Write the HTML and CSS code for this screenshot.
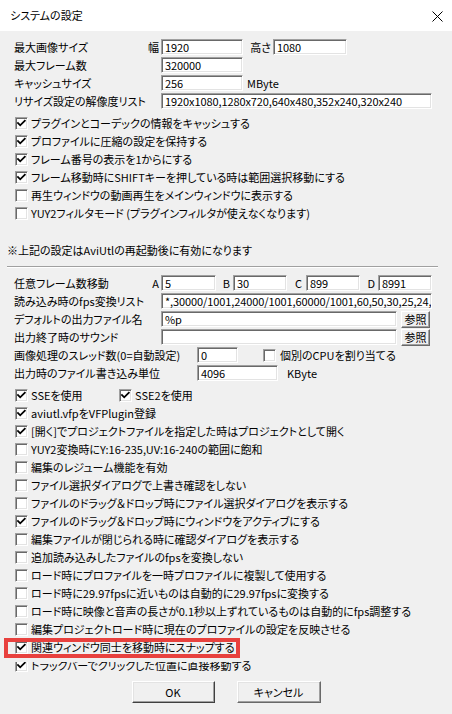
FILE: index.html
```html
<!DOCTYPE html>
<html lang="ja">
<head>
<meta charset="utf-8">
<title>システムの設定</title>
<link rel="stylesheet" href="styles.css">
</head>
<body>
<div class="window">
  <header class="titlebar">
    <span class="title">システムの設定</span>
    <svg class="close" width="11" height="11" viewBox="0 0 11 11"><path d="M0.5 0.5 L10.5 10.5 M10.5 0.5 L0.5 10.5" stroke="#000" stroke-width="1" fill="none"/></svg>
  </header>
  <main class="content">
    <section class="group g-top">
      <div class="row"><span class="lbl w147">最大画像サイズ</span><span class="axis a14">幅</span><span class="field w82">1920</span><span class="axis a30">高さ</span><span class="field w74">1080</span></div>
      <div class="row"><span class="lbl w161">最大フレーム数</span><span class="field w82">320000</span></div>
      <div class="row"><span class="lbl w161">キャッシュサイズ</span><span class="field w82">256</span><span class="unit">MByte</span></div>
      <div class="row"><span class="lbl w161">リサイズ設定の解像度リスト</span><span class="field w271">1920x1080,1280x720,640x480,352x240,320x240</span></div>
    </section>

    <section class="checks c-top">
      <div class="chk"><span class="cb on"><svg viewBox="0 0 11 11"><path d="M2 5 L4.2 7.3 L8.8 2.7" /></svg></span><span>プラグインとコーデックの情報をキャッシュする</span></div>
      <div class="chk"><span class="cb on"><svg viewBox="0 0 11 11"><path d="M2 5 L4.2 7.3 L8.8 2.7" /></svg></span><span>プロファイルに圧縮の設定を保持する</span></div>
      <div class="chk"><span class="cb on"><svg viewBox="0 0 11 11"><path d="M2 5 L4.2 7.3 L8.8 2.7" /></svg></span><span>フレーム番号の表示を1からにする</span></div>
      <div class="chk"><span class="cb on"><svg viewBox="0 0 11 11"><path d="M2 5 L4.2 7.3 L8.8 2.7" /></svg></span><span>フレーム移動時にSHIFTキーを押している時は範囲選択移動にする</span></div>
      <div class="chk"><span class="cb"></span><span>再生ウィンドウの動画再生をメインウィンドウに表示する</span></div>
      <div class="chk"><span class="cb"></span><span>YUY2フィルタモード (プラグインフィルタが使えなくなります)</span></div>
    </section>

    <p class="note">※上記の設定はAviUtlの再起動後に有効になります</p>
    <div class="sep"></div>

    <section class="group g-mid">
      <div class="row"><span class="lbl w147">任意フレーム数移動</span><span class="axis a14">A</span><span class="field w55">5</span><span class="axis a17">B</span><span class="field w54">30</span><span class="axis a19">C</span><span class="field w54">899</span><span class="axis a18">D</span><span class="field w54">8991</span></div>
      <div class="row"><span class="lbl w161">読み込み時のfps変換リスト</span><span class="field w271">*,30000/1001,24000/1001,60000/1001,60,50,30,25,24,20,15,12,10,5,1</span></div>
      <div class="row"><span class="lbl w161">デフォルトの出力ファイル名</span><span class="field w236">%p</span><span class="btn-small">参照</span></div>
      <div class="row"><span class="lbl w161">出力終了時のサウンド</span><span class="field w236"></span><span class="btn-small">参照</span></div>
      <div class="row"><span class="lbl w197">画像処理のスレッド数(0=自動設定)</span><span class="field w41">0</span><span class="cb cpu"></span><span class="cpu-text">個別のCPUを割り当てる</span></div>
      <div class="row"><span class="lbl w197">出力時のファイル書き込み単位</span><span class="field w81">4096</span><span class="unit u9">KByte</span></div>
    </section>

    <section class="checks c-bottom">
      <div class="chk"><span class="chk-item"><span class="cb on"><svg viewBox="0 0 11 11"><path d="M2 5 L4.2 7.3 L8.8 2.7" /></svg></span><span>SSEを使用</span></span><span class="chk-item"><span class="cb on"><svg viewBox="0 0 11 11"><path d="M2 5 L4.2 7.3 L8.8 2.7" /></svg></span><span>SSE2を使用</span></span></div>
      <div class="chk"><span class="cb on"><svg viewBox="0 0 11 11"><path d="M2 5 L4.2 7.3 L8.8 2.7" /></svg></span><span>aviutl.vfpをVFPlugin登録</span></div>
      <div class="chk"><span class="cb on"><svg viewBox="0 0 11 11"><path d="M2 5 L4.2 7.3 L8.8 2.7" /></svg></span><span>[開く]でプロジェクトファイルを指定した時はプロジェクトとして開く</span></div>
      <div class="chk"><span class="cb"></span><span>YUY2変換時にY:16-235,UV:16-240の範囲に飽和</span></div>
      <div class="chk"><span class="cb"></span><span>編集のレジューム機能を有効</span></div>
      <div class="chk"><span class="cb"></span><span>ファイル選択ダイアログで上書き確認をしない</span></div>
      <div class="chk"><span class="cb"></span><span>ファイルのドラッグ＆ドロップ時にファイル選択ダイアログを表示する</span></div>
      <div class="chk"><span class="cb on"><svg viewBox="0 0 11 11"><path d="M2 5 L4.2 7.3 L8.8 2.7" /></svg></span><span>ファイルのドラッグ＆ドロップ時にウィンドウをアクティブにする</span></div>
      <div class="chk"><span class="cb"></span><span>編集ファイルが閉じられる時に確認ダイアログを表示する</span></div>
      <div class="chk"><span class="cb"></span><span>追加読み込みしたファイルのfpsを変換しない</span></div>
      <div class="chk"><span class="cb"></span><span>ロード時にプロファイルを一時プロファイルに複製して使用する</span></div>
      <div class="chk"><span class="cb"></span><span>ロード時に29.97fpsに近いものは自動的に29.97fpsに変換する</span></div>
      <div class="chk"><span class="cb"></span><span>ロード時に映像と音声の長さが0.1秒以上ずれているものは自動的にfps調整する</span></div>
      <div class="chk"><span class="cb"></span><span>編集プロジェクトロード時に現在のプロファイルの設定を反映させる</span></div>
      <div class="chk snap"><span class="cb on"><svg viewBox="0 0 11 11"><path d="M2 5 L4.2 7.3 L8.8 2.7" /></svg></span><span>関連ウィンドウ同士を移動時にスナップする</span></div>
      <div class="chk"><span class="cb on"><svg viewBox="0 0 11 11"><path d="M2 5 L4.2 7.3 L8.8 2.7" /></svg></span><span>トラックバーでクリックした位置に直接移動する</span></div>
    </section>

    <div class="buttons">
      <span class="btn default">OK</span>
      <span class="btn">キャンセル</span>
    </div>
  </main>
</div>
</body>
</html>
```

FILE: styles.css
```css
html, body {
  margin: 0;
  padding: 0;
}
body {
  width: 452px;
  height: 714px;
  overflow: hidden;
  background: #f0f0f0;
  font-family: "Noto Sans CJK JP", "Noto Sans", sans-serif;
  font-size: 11px;
  font-feature-settings: "palt";
  color: #000;
}
.window {
  width: 452px;
  height: 714px;
  display: flex;
  flex-direction: column;
}
.titlebar {
  height: 31px;
  background: #fff;
  display: flex;
  align-items: center;
  justify-content: space-between;
  padding: 0 9px 0 10px;
  box-sizing: border-box;
}
.title {
  font-size: 11px;
  line-height: 31px;
}
.close {
  display: block;
  margin-top: 1px;
}
.content {
  padding: 7px 7px 0 7px;
  display: flex;
  flex-direction: column;
}
.group {
  display: flex;
  flex-direction: column;
}
.row {
  height: 18px;
  display: flex;
  align-items: center;
  padding-left: 7px;
  white-space: nowrap;
}
.lbl {
  flex: none;
  line-height: 18px;
}
.w147 { width: 133px; }
.w161 { width: 147px; }
.w197 { width: 183px; }
.axis {
  flex: none;
  text-align: right;
  padding-right: 2px;
  box-sizing: border-box;
  line-height: 18px;
}
.a14 { width: 14px; }
.a17 { width: 17px; padding-right: 3px; }
.a18 { width: 18px; padding-right: 3px; }
.a19 { width: 19px; padding-right: 4px; }
.a30 { width: 30px; }
.field {
  flex: none;
  height: 16px;
  box-sizing: border-box;
  background: #fff;
  border: 1px solid;
  border-color: #a0a0a0 #fff #fff #a0a0a0;
  box-shadow: inset 1px 1px 0 #696969, inset -1px -1px 0 #e3e3e3;
  padding: 0 2px 0 3px;
  line-height: 14px;
  overflow: hidden;
  white-space: nowrap;
  letter-spacing: -0.1px;
}
.w82 { width: 82px; }
.w74 { width: 74px; }
.w271 { width: 271px; }
.w55 { width: 55px; }
.w54 { width: 54px; }
.w236 { width: 236px; }
.w41 { width: 41px; }
.w81 { width: 81px; }
.unit {
  margin-left: 4px;
  line-height: 18px;
}
.u9 { margin-left: 9px; }
.btn-small {
  flex: none;
  width: 29px;
  height: 17px;
  margin-left: 4px;
  box-sizing: border-box;
  border: 1px solid;
  border-color: #fff #696969 #696969 #fff;
  box-shadow: inset -1px -1px 0 #a0a0a0;
  display: flex;
  align-items: center;
  justify-content: center;
  line-height: 14px;
}
.checks {
  display: flex;
  flex-direction: column;
}
.c-top { margin-top: 4px; }
.c-bottom { margin-top: 4px; }
.chk {
  height: 18px;
  display: flex;
  align-items: center;
  padding-left: 8px;
  white-space: nowrap;
  line-height: 18px;
}
.chk-item {
  display: flex;
  align-items: center;
  width: 104px;
  flex: none;
}
.cb {
  flex: none;
  width: 13px;
  height: 13px;
  box-sizing: border-box;
  background: #fff;
  border: 1px solid;
  border-color: #a0a0a0 #fff #fff #a0a0a0;
  box-shadow: inset 1px 1px 0 #696969, inset -1px -1px 0 #e3e3e3;
  margin-right: 3px;
  position: relative;
}
.cb svg {
  position: absolute;
  left: 0;
  top: 0;
  width: 11px;
  height: 11px;
}
.cb svg path {
  fill: none;
  stroke: #000;
  stroke-width: 1.8;
  stroke-linecap: square;
}
.cb.cpu {
  margin-left: 25px;
  margin-right: 4px;
}
.note {
  margin: 19px 0 0 0;
  height: 18px;
  line-height: 18px;
  white-space: nowrap;
}
.sep {
  margin-top: 7px;
  width: 431px;
  height: 0;
  border-top: 1px solid #a0a0a0;
  border-bottom: 1px solid #fff;
}
.g-mid { margin-top: 6px; }
.snap {
  position: relative;
}
.snap::before {
  content: "";
  position: absolute;
  left: -3px;
  top: 0;
  width: 236px;
  height: 20px;
  box-sizing: border-box;
  border: 4px solid #e8413e;
  z-index: 2;
}
.snap::after {
  content: "";
  position: absolute;
  left: -3px;
  top: 20px;
  width: 236px;
  height: 4px;
  background: #f0f0f0;
  z-index: 1;
}
.buttons {
  margin-top: 7px;
  display: flex;
  justify-content: center;
  gap: 22px;
}
.btn {
  width: 84px;
  height: 22px;
  box-sizing: border-box;
  border: 1px solid;
  border-color: #fff #696969 #696969 #fff;
  box-shadow: inset -1px -1px 0 #a0a0a0, inset 1px 1px 0 #e3e3e3;
  display: flex;
  align-items: center;
  justify-content: center;
  line-height: 16px;
}
.btn.default {
  width: 83px;
  border-color: #fff #404040 #404040 #fff;
}
```
